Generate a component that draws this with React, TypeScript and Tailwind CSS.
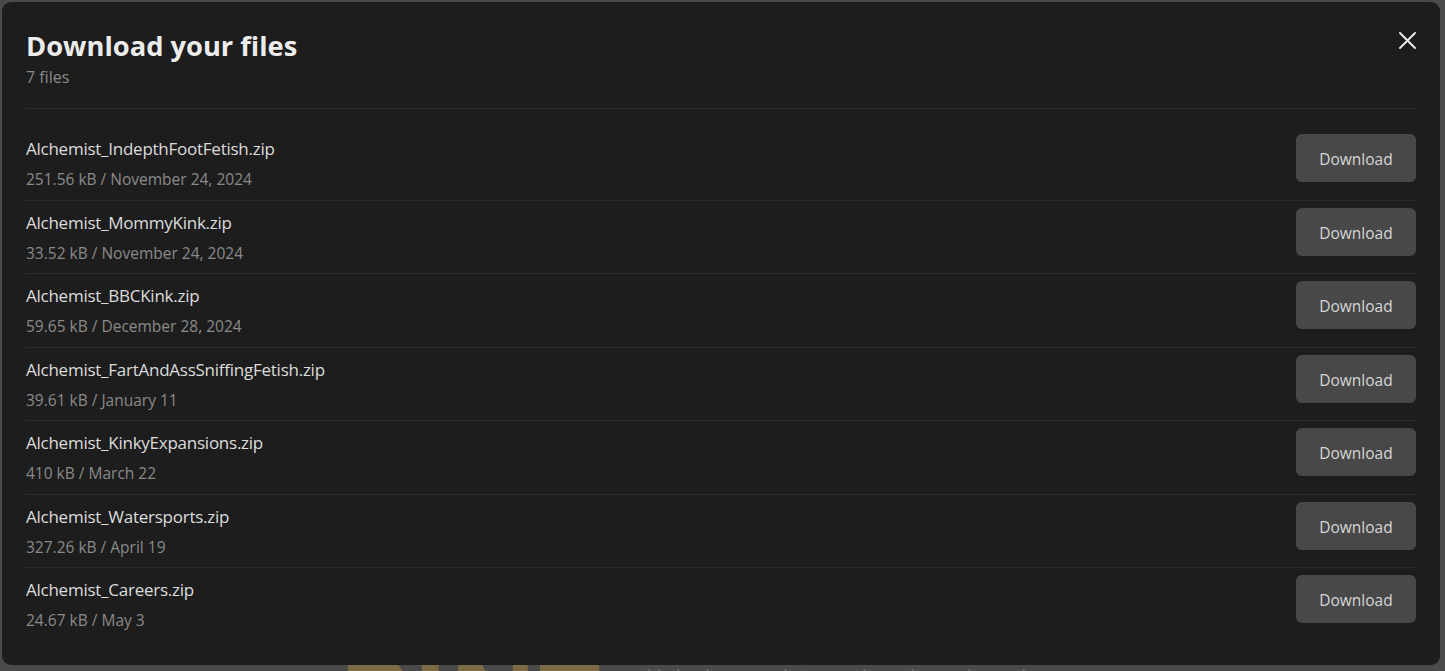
import React from "react";

const files = [
  { name: "Alchemist_IndepthFootFetish.zip", meta: "251.56 kB / November 24, 2024" },
  { name: "Alchemist_MommyKink.zip", meta: "33.52 kB / November 24, 2024" },
  { name: "Alchemist_BBCKink.zip", meta: "59.65 kB / December 28, 2024" },
  { name: "Alchemist_FartAndAssSniffingFetish.zip", meta: "39.61 kB / January 11" },
  { name: "Alchemist_KinkyExpansions.zip", meta: "410 kB / March 22" },
  { name: "Alchemist_Watersports.zip", meta: "327.26 kB / April 19" },
  { name: "Alchemist_Careers.zip", meta: "24.67 kB / May 3" },
];

export default function App() {
  return (
    <div
      className="relative h-[671px] w-[1445px] overflow-hidden bg-[#4a4a4a]"
      style={{ fontFamily: '"Open Sans", "Noto Sans", sans-serif' }}
    >
      {/* background page content peeking out */}
      <div className="absolute left-[338px] top-[640px] text-[110px] font-bold leading-none text-[#7d6b46]">
        BINT
      </div>
      <div className="absolute left-[646px] top-[660px] text-[22px] text-[#6a6a6a]">
        Unlock more interactions based on sim
      </div>

      {/* modal */}
      <div className="absolute left-[2px] top-[2px] flex h-[663px] w-[1438px] flex-col rounded-[9px] bg-[#1d1d1d] px-[24px] pt-[24px]">
        <div className="relative border-b border-[#2c2c2c] pb-[20px]">
          <h1 className="text-[27.3px] font-bold leading-[40px] text-[#ececec]">Download your files</h1>
          <p className="text-[16px] leading-[22px] text-[#8a8a8a]">7 files</p>
          <button className="absolute right-0 top-[6px] flex h-[17px] w-[17px] items-center justify-center">
            <svg width="17" height="17" viewBox="0 0 17 17" fill="none">
              <path d="M1 1L16 16M16 1L1 16" stroke="#ececec" strokeWidth="1.9" strokeLinecap="round" />
            </svg>
          </button>
        </div>
        <div className="flex flex-col pt-[18px]">
          {files.map((f, i) => (
            <div
              key={f.name}
              className={`flex items-start justify-between pt-[7px] pb-[8px] ${
                i < files.length - 1 ? "border-b border-[#2c2c2c]" : ""
              }`}
            >
              <div className="flex flex-col">
                <div className="pt-[1px] text-[17px] leading-[28px] tracking-[-0.25px] text-[#dcdcdc]">
                  {f.name}
                </div>
                <div className="mt-[5px] text-[15.5px] leading-[23.5px] text-[#8a8a8a]">{f.meta}</div>
              </div>
              <button className="flex h-[48px] w-[120px] items-center justify-center rounded-[6px] bg-[#484848] pt-[4px] text-[15.5px] text-[#d6d6d6]">
                Download
              </button>
            </div>
          ))}
        </div>
      </div>
    </div>
  );
}
